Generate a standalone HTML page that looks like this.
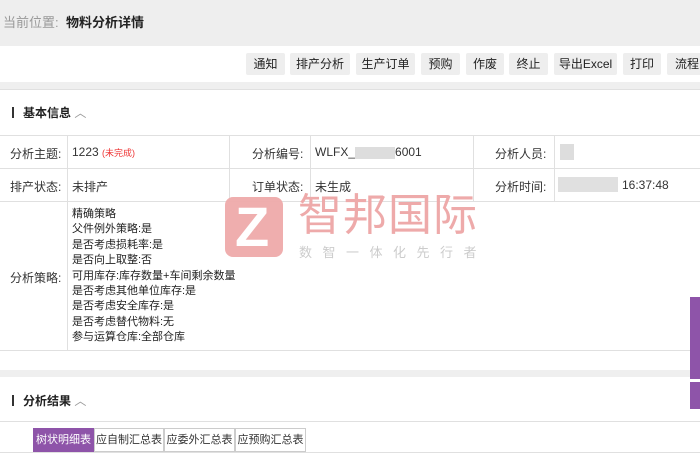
<!DOCTYPE html>
<html><head><meta charset="utf-8"><style>
*{margin:0;padding:0;box-sizing:border-box}
html,body{width:700px;height:457px;overflow:hidden}
body{background:#fff;font-family:"Liberation Sans","Noto Sans CJK SC",sans-serif;font-size:12px;color:#333;position:relative}
.abs{position:absolute}
.hdr{left:0;top:0;width:700px;height:46px;background:#eeeeee}
.btn{top:53px;height:22px;background:#eeeeee;border-radius:2px;line-height:22px;text-align:center;font-size:12px;color:#222;white-space:nowrap}
.strip{left:0;width:700px;background:#efefef}
.hl{left:0;width:700px;height:1px;background:#e0e0e0}
.vl{width:1px;background:#e0e0e0}
.t{white-space:nowrap}
.tab{top:428px;height:24px;line-height:22px;border:1px solid #ccc;font-size:11px;text-align:center;background:#fff;white-space:nowrap;overflow:hidden}
</style></head><body>
<div class="abs hdr"></div>
<div class="abs t" style="left:3px;top:12px;font-size:13px;color:#999">当前位置:</div>
<div class="abs t" style="left:66px;top:12px;font-size:13px;font-weight:bold;color:#222">物料分析详情</div>

<div class="abs btn" style="left:246px;width:39px">通知</div>
<div class="abs btn" style="left:290px;width:60px">排产分析</div>
<div class="abs btn" style="left:356px;width:59px">生产订单</div>
<div class="abs btn" style="left:421px;width:39px">预购</div>
<div class="abs btn" style="left:466px;width:38px">作废</div>
<div class="abs btn" style="left:509px;width:39px">终止</div>
<div class="abs btn" style="left:554px;width:63px">导出Excel</div>
<div class="abs btn" style="left:623px;width:38px">打印</div>
<div class="abs btn" style="left:667px;width:40px">流程</div>

<div class="abs strip" style="top:82px;height:7px"></div>
<div class="abs hl" style="top:89px"></div>

<div class="abs" style="left:12px;top:107px;width:2px;height:11px;background:#333"></div>
<div class="abs t" style="left:23px;top:104px;font-weight:bold;font-size:12px;color:#222">基本信息 <span style="color:#999;font-weight:normal">︿</span></div>

<div class="abs hl" style="top:135px"></div>
<div class="abs hl" style="top:168px"></div>
<div class="abs hl" style="top:201px"></div>
<div class="abs hl" style="top:350px"></div>
<div class="abs vl" style="left:67px;top:135px;height:215px"></div>
<div class="abs vl" style="left:229px;top:135px;height:66px"></div>
<div class="abs vl" style="left:310px;top:135px;height:66px"></div>
<div class="abs vl" style="left:473px;top:135px;height:66px"></div>
<div class="abs vl" style="left:554px;top:135px;height:66px"></div>

<div class="abs t" style="left:10px;top:145px">分析主题:</div>
<div class="abs t" style="left:72px;top:145px">1223 <span style="color:#e33;font-size:9px">(未完成)</span></div>
<div class="abs t" style="left:252px;top:145px">分析编号:</div>
<div class="abs t" style="left:315px;top:145px">WLFX_<span style="display:inline-block;width:40px;height:12px;background:#ddd;vertical-align:middle"></span>6001</div>
<div class="abs t" style="left:495px;top:145px">分析人员:</div>
<div class="abs" style="left:560px;top:144px;width:14px;height:16px;background:#ddd"></div>
<div class="abs t" style="left:10px;top:178px">排产状态:</div>
<div class="abs t" style="left:72px;top:178px">未排产</div>
<div class="abs t" style="left:252px;top:178px">订单状态:</div>
<div class="abs t" style="left:315px;top:178px">未生成</div>
<div class="abs t" style="left:495px;top:178px">分析时间:</div>
<div class="abs" style="left:558px;top:177px;width:60px;height:15px;background:#e0e0e0"></div>
<div class="abs t" style="left:622px;top:178px">16:37:48</div>

<div class="abs t" style="left:10px;top:269px">分析策略:</div>
<div class="abs t" style="left:72px;top:207px;line-height:15.4px;font-size:11px;color:#222">精确策略<br>父件例外策略:是<br>是否考虑损耗率:是<br>是否向上取整:否<br>可用库存:库存数量+车间剩余数量<br>是否考虑其他单位库存:是<br>是否考虑安全库存:是<br>是否考虑替代物料:无<br>参与运算仓库:全部仓库</div>

<div class="abs" style="left:225px;top:197px;width:58px;height:60px;background:#eeaaaa;border-radius:8px;opacity:.95"></div>
<div class="abs t" style="left:235px;top:194px;font-size:56px;font-weight:bold;color:#fff;font-family:'Liberation Sans',sans-serif">Z</div>
<div class="abs t" style="left:298px;top:191px;font-size:44px;line-height:50px;color:#eeaaaa;letter-spacing:1px">智邦国际</div>
<div class="abs t" style="left:299px;top:242px;font-size:13px;color:#ccc;letter-spacing:10.5px">数智一体化先行者</div>

<div class="abs strip" style="top:370px;height:7px"></div>
<div class="abs" style="left:12px;top:395px;width:2px;height:11px;background:#333"></div>
<div class="abs t" style="left:23px;top:392px;font-weight:bold;font-size:12px;color:#222">分析结果 <span style="color:#999;font-weight:normal">︿</span></div>
<div class="abs hl" style="top:421px"></div>

<div class="abs tab" style="left:33px;width:61px;background:#8e54a9;color:#fff;border-color:#8e54a9">树状明细表</div>
<div class="abs tab" style="left:94px;width:70px">应自制汇总表</div>
<div class="abs tab" style="left:164px;width:71px">应委外汇总表</div>
<div class="abs tab" style="left:235px;width:71px">应预购汇总表</div>
<div class="abs hl" style="top:452px"></div>

<div class="abs" style="left:690px;top:297px;width:10px;height:82px;background:#8e54a9"></div>
<div class="abs" style="left:690px;top:382px;width:10px;height:27px;background:#8e54a9"></div>
</body></html>
